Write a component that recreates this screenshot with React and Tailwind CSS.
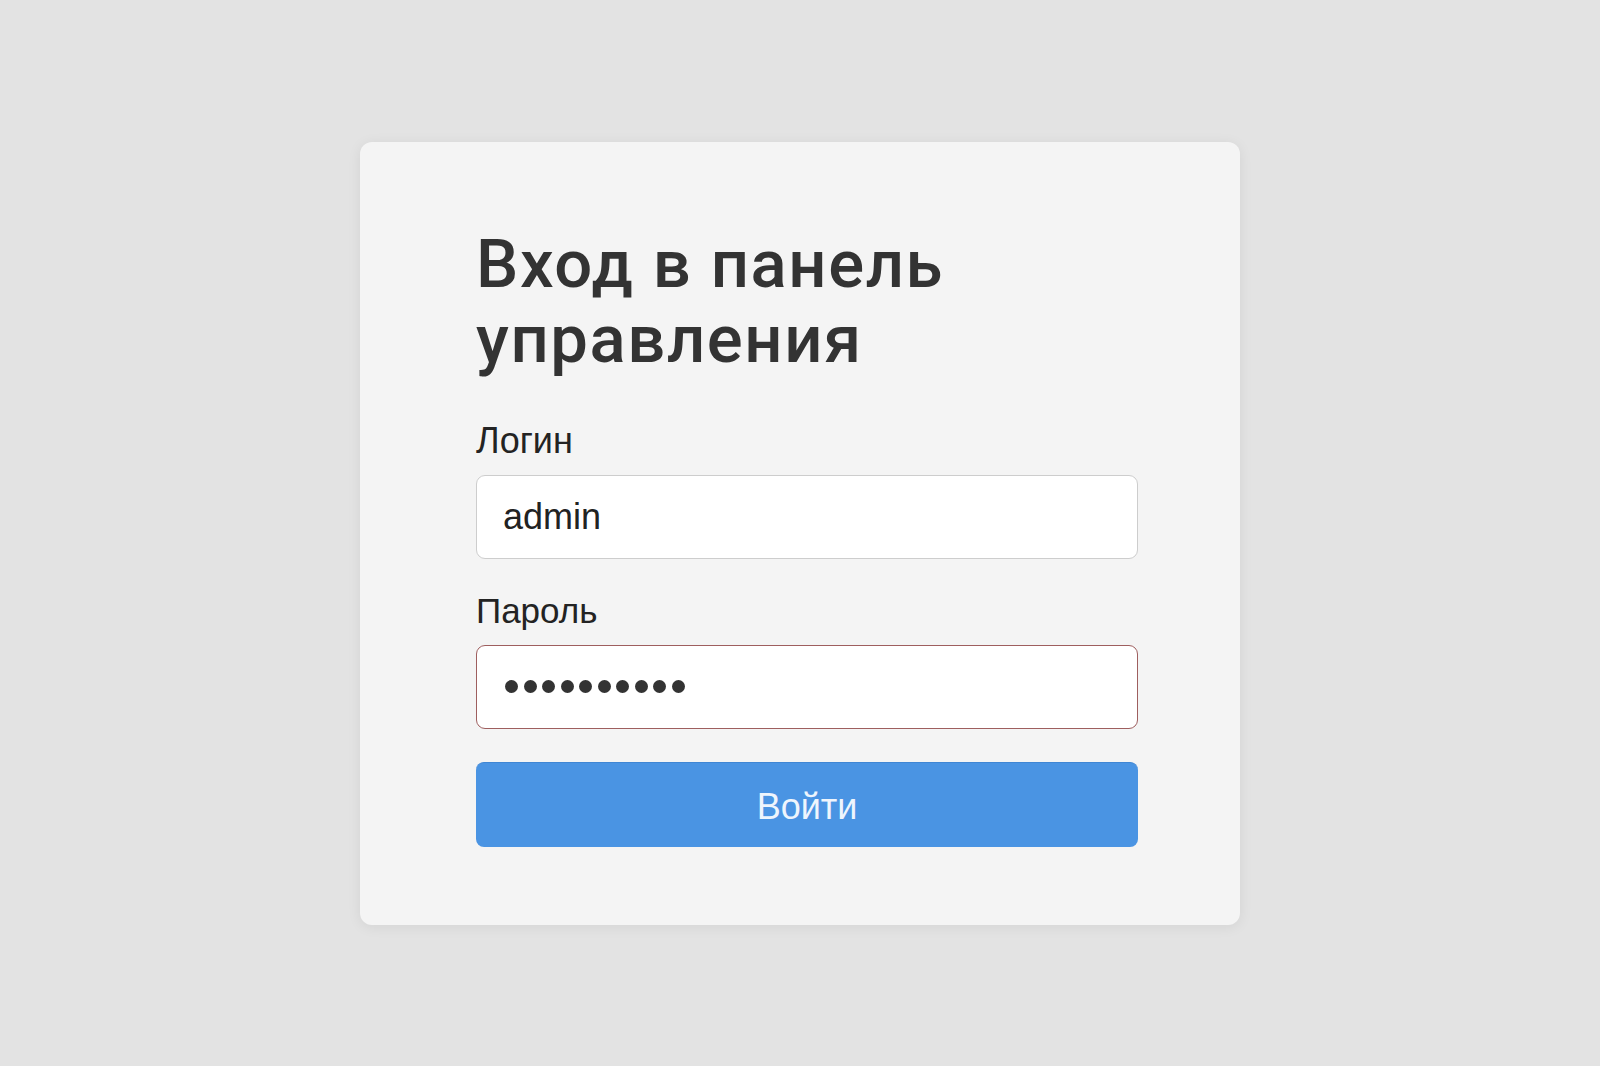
export default function App() {
  const dots = Array.from({ length: 10 });

  return (
    <main
      className="flex h-screen w-full items-center justify-center bg-[#e3e3e3]"
      style={{ fontFamily: "'Liberation Sans', Arial, sans-serif" }}
    >
      <form
        className="flex w-[880px] flex-col rounded-[12px] bg-[#f4f4f4] pb-[78px] pl-[116px] pr-[102px] pt-[85px] shadow-[0_2px_14px_rgba(0,0,0,0.07)]"
        onSubmit={(e) => e.preventDefault()}
      >
        {/* Title */}
        <h1 className="font-['Roboto',sans-serif] text-[67px] font-medium leading-[75px] tracking-[1.6px] text-[#333333]">
          Вход в панель
          <br />
          управления
        </h1>

        {/* Login */}
        <label htmlFor="login" className="mt-[42px] text-[36px] leading-[43px] text-[#232323]">
          Логин
        </label>
        <div className="mt-[13px] flex h-[84px] items-center rounded-[9px] border-[1.5px] border-[#cdcdcd] bg-white px-[26px]">
          <input
            id="login"
            type="text"
            defaultValue="admin"
            className="w-full bg-transparent text-[36px] leading-[43px] text-[#222222] outline-none"
          />
        </div>

        {/* Password */}
        <label className="mt-[30px] text-[35px] leading-[43px] text-[#232323]">Пароль</label>
        <div className="mt-[13px] flex h-[84px] items-center gap-[5.5px] rounded-[9px] border-[1.5px] border-[#9e5e5e] bg-white px-[28px]">
          {dots.map((_, i) => (
            <span key={i} className="h-[13px] w-[13px] rounded-full bg-[#333333]" />
          ))}
        </div>

        {/* Submit */}
        <button
          type="submit"
          className="mt-[33px] flex h-[85px] items-center justify-center rounded-[8px] border-t border-[#3f86d4] bg-[#4a94e3] pt-[4px] text-[36px] text-[#eef5fd]"
        >
          Войти
        </button>
      </form>
    </main>
  );
}
